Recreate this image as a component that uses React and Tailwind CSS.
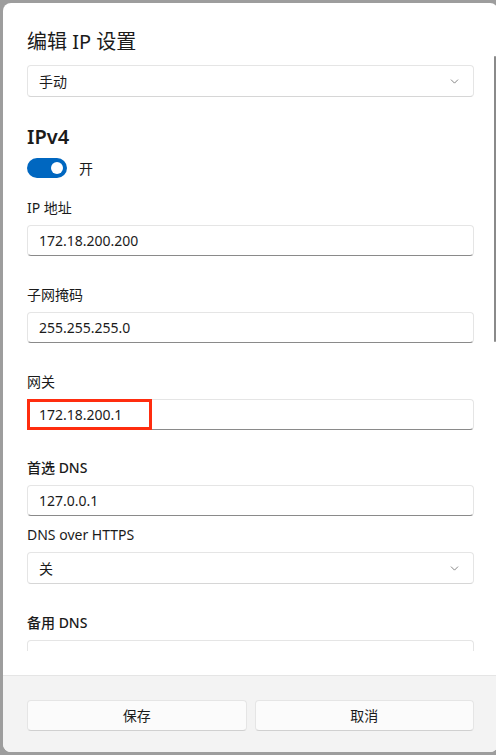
import { ChevronDown } from 'lucide-react'

const FONT = { fontFamily: '"Segoe UI", "Noto Sans", "Noto Sans CJK SC", sans-serif' }

function Field({ label, value, bold, highlight, className = '' }) {
  return (
    <div className={className}>
      <div className={`text-[14px] leading-[20px] text-[#1b1b1b] ${bold ? 'font-medium' : ''}`}>{label}</div>
      <div className="relative mt-[7px] h-[31px] rounded-[4px] border border-[#e5e5e5] border-b-[#8a8a8a] bg-white pl-[11px] flex items-center text-[14px] text-[#1b1b1b]">
        {value}
        {highlight && (
          <div className="absolute left-[-1px] top-[-1px] h-[31px] w-[125px] border-[3px] border-[#ff2d0f]" />
        )}
      </div>
    </div>
  )
}

function Select({ value, className = '' }) {
  return (
    <div className={`h-[32px] rounded-[4px] border border-[#e5e5e5] border-b-[#d6d6d6] bg-white pl-[11px] pr-[12px] flex items-center justify-between text-[14px] text-[#1b1b1b] ${className}`}>
      <span>{value}</span>
      <ChevronDown size={13} strokeWidth={1.4} className="text-[#606060]" />
    </div>
  )
}

export default function App() {
  return (
    <div className="w-[496px] h-[755px] overflow-hidden bg-[#9d9d9d] pt-[3px] pl-[3px]" style={FONT}>
      <div className="relative w-[495px] h-[749px] rounded-[8px] bg-white overflow-hidden flex flex-col">
        {/* scrollable body */}
        <div className="h-[648px] overflow-hidden px-[24px] pt-[25px]">
          <h1 className="text-[20px] leading-[28px] text-[#1b1b1b]">编辑 IP 设置</h1>
          <Select value="手动" className="mt-[9px]" />

          <h2 className="mt-[26px] text-[20px] leading-[28px] font-semibold text-[#1b1b1b]">IPv4</h2>
          <div className="mt-[7px] flex items-center h-[20px]">
            <div className="w-[40px] h-[20px] rounded-full bg-[#0067c0] flex items-center justify-end pr-[4px]">
              <div className="w-[12px] h-[12px] rounded-full bg-white" />
            </div>
            <span className="ml-[12px] text-[14px] text-[#1b1b1b]">开</span>
          </div>

          <Field label="IP 地址" value="172.18.200.200" className="mt-[20px]" />
          <Field label="子网掩码" value="255.255.255.0" className="mt-[29px]" />
          <Field label="网关" value="172.18.200.1" highlight className="mt-[29px]" />
          <Field label="首选 DNS" value="127.0.0.1" bold className="mt-[28px]" />

          <div className="mt-[9px] text-[14px] leading-[20px] text-[#1b1b1b]">DNS over HTTPS</div>
          <Select value="关" className="mt-[7px]" />

          <Field label="备用 DNS" value="" bold className="mt-[29px]" />
        </div>

        <div className="h-[24px]" />

        {/* footer */}
        <div className="flex-1 border-t border-[#e5e5e5] bg-[#f3f3f3] px-[24px] pt-[24px]">
          <div className="grid grid-cols-2 gap-[8px]">
            <button className="h-[31px] rounded-[4px] border border-[#e5e5e5] border-b-[#d0d0d0] bg-[#fbfbfb] text-[14px] text-[#1b1b1b]">保存</button>
            <button className="h-[31px] rounded-[4px] border border-[#e5e5e5] border-b-[#d0d0d0] bg-[#fbfbfb] text-[14px] text-[#1b1b1b]">取消</button>
          </div>
        </div>

        {/* scrollbar thumb */}
        <div className="absolute left-[491px] top-[53px] w-[2px] h-[286px] rounded-full bg-[#8a8a8a]" />
      </div>
    </div>
  )
}
